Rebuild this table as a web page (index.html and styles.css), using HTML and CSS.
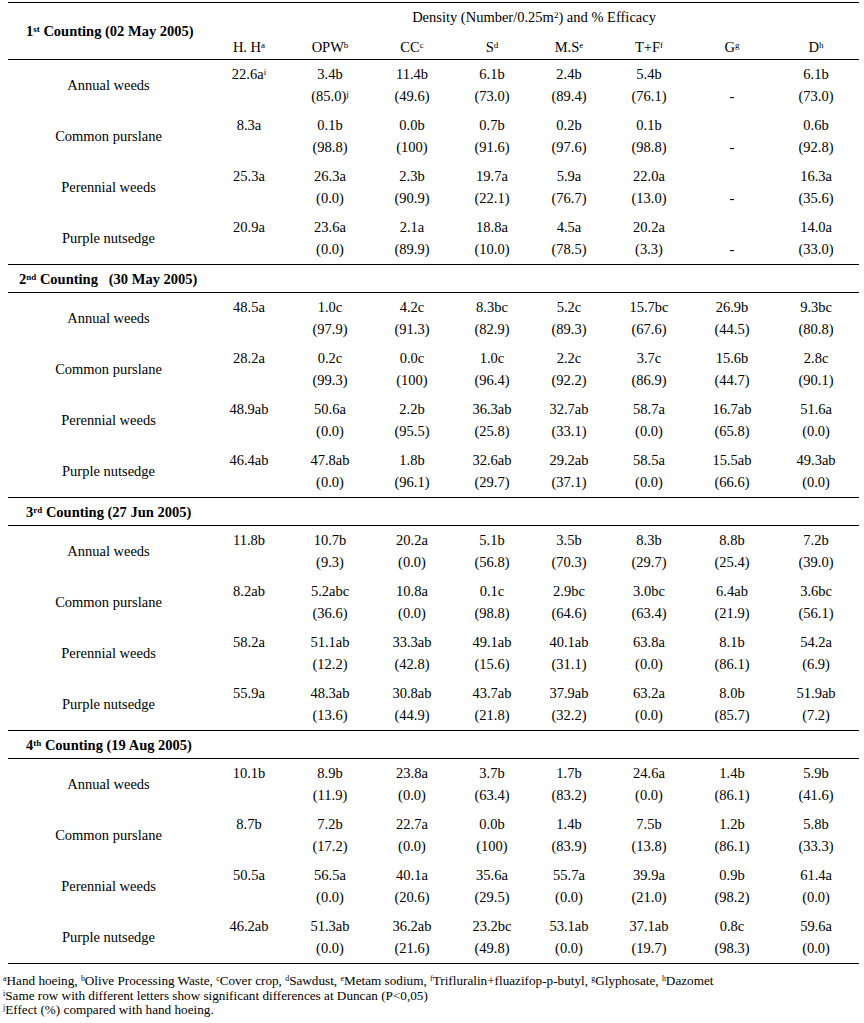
FILE: index.html
```html
<!DOCTYPE html>
<html lang="en">
<head>
<meta charset="utf-8">
<title>Weed density and efficacy</title>
<link rel="stylesheet" href="styles.css">
</head>
<body>
<table class="tbl">
  <colgroup>
    <col class="c-lbl"><col class="c-hh"><col class="c-opw"><col class="c-cc"><col class="c-s"><col class="c-ms"><col class="c-tf"><col class="c-g"><col class="c-d">
  </colgroup>
  <thead>
    <tr class="hd1">
      <td class="hd-title" rowspan="2">1<sup class="s">st</sup> Counting (02 May 2005)</td>
      <td class="hd-density" colspan="8">Density (Number/0.25m<sup class="s">2</sup>) and % Efficacy</td>
    </tr>
    <tr class="hd2">
      <td>H. H<sup class="s">a</sup></td>
      <td>OPW<sup class="s">b</sup></td>
      <td>CC<sup class="s">c</sup></td>
      <td>S<sup class="s">d</sup></td>
      <td>M.S<sup class="s">e</sup></td>
      <td>T+F<sup class="s">f</sup></td>
      <td>G<sup class="s">g</sup></td>
      <td>D<sup class="s">h</sup></td>
    </tr>
  </thead>
  <tbody>
    <tr class="grp">
      <td class="lbl">Annual weeds</td>
      <td>22.6a<sup class="s">i</sup></td>
      <td>3.4b<br>(85.0)<sup class="s">j</sup></td>
      <td>11.4b<br>(49.6)</td>
      <td>6.1b<br>(73.0)</td>
      <td>2.4b<br>(89.4)</td>
      <td>5.4b<br>(76.1)</td>
      <td>&nbsp;<br>-</td>
      <td>6.1b<br>(73.0)</td>
    </tr>
    <tr class="grp">
      <td class="lbl">Common purslane</td>
      <td>8.3a</td>
      <td>0.1b<br>(98.8)</td>
      <td>0.0b<br>(100)</td>
      <td>0.7b<br>(91.6)</td>
      <td>0.2b<br>(97.6)</td>
      <td>0.1b<br>(98.8)</td>
      <td>&nbsp;<br>-</td>
      <td>0.6b<br>(92.8)</td>
    </tr>
    <tr class="grp">
      <td class="lbl">Perennial weeds</td>
      <td>25.3a</td>
      <td>26.3a<br>(0.0)</td>
      <td>2.3b<br>(90.9)</td>
      <td>19.7a<br>(22.1)</td>
      <td>5.9a<br>(76.7)</td>
      <td>22.0a<br>(13.0)</td>
      <td>&nbsp;<br>-</td>
      <td>16.3a<br>(35.6)</td>
    </tr>
    <tr class="grp">
      <td class="lbl">Purple nutsedge</td>
      <td>20.9a</td>
      <td>23.6a<br>(0.0)</td>
      <td>2.1a<br>(89.9)</td>
      <td>18.8a<br>(10.0)</td>
      <td>4.5a<br>(78.5)</td>
      <td>20.2a<br>(3.3)</td>
      <td>&nbsp;<br>-</td>
      <td>14.0a<br>(33.0)</td>
    </tr>

    <tr class="sec">
      <td class="sec-2" colspan="9">2<sup class="s">nd</sup> Counting&nbsp;&nbsp; (30 May 2005)</td>
    </tr>
    <tr class="grp">
      <td class="lbl">Annual weeds</td>
      <td>48.5a</td>
      <td>1.0c<br>(97.9)</td>
      <td>4.2c<br>(91.3)</td>
      <td>8.3bc<br>(82.9)</td>
      <td>5.2c<br>(89.3)</td>
      <td>15.7bc<br>(67.6)</td>
      <td>26.9b<br>(44.5)</td>
      <td>9.3bc<br>(80.8)</td>
    </tr>
    <tr class="grp">
      <td class="lbl">Common purslane</td>
      <td>28.2a</td>
      <td>0.2c<br>(99.3)</td>
      <td>0.0c<br>(100)</td>
      <td>1.0c<br>(96.4)</td>
      <td>2.2c<br>(92.2)</td>
      <td>3.7c<br>(86.9)</td>
      <td>15.6b<br>(44.7)</td>
      <td>2.8c<br>(90.1)</td>
    </tr>
    <tr class="grp">
      <td class="lbl">Perennial weeds</td>
      <td>48.9ab</td>
      <td>50.6a<br>(0.0)</td>
      <td>2.2b<br>(95.5)</td>
      <td>36.3ab<br>(25.8)</td>
      <td>32.7ab<br>(33.1)</td>
      <td>58.7a<br>(0.0)</td>
      <td>16.7ab<br>(65.8)</td>
      <td>51.6a<br>(0.0)</td>
    </tr>
    <tr class="grp">
      <td class="lbl">Purple nutsedge</td>
      <td>46.4ab</td>
      <td>47.8ab<br>(0.0)</td>
      <td>1.8b<br>(96.1)</td>
      <td>32.6ab<br>(29.7)</td>
      <td>29.2ab<br>(37.1)</td>
      <td>58.5a<br>(0.0)</td>
      <td>15.5ab<br>(66.6)</td>
      <td>49.3ab<br>(0.0)</td>
    </tr>

    <tr class="sec">
      <td colspan="9">3<sup class="s">rd</sup> Counting (27 Jun 2005)</td>
    </tr>
    <tr class="grp">
      <td class="lbl">Annual weeds</td>
      <td>11.8b</td>
      <td>10.7b<br>(9.3)</td>
      <td>20.2a<br>(0.0)</td>
      <td>5.1b<br>(56.8)</td>
      <td>3.5b<br>(70.3)</td>
      <td>8.3b<br>(29.7)</td>
      <td>8.8b<br>(25.4)</td>
      <td>7.2b<br>(39.0)</td>
    </tr>
    <tr class="grp">
      <td class="lbl">Common purslane</td>
      <td>8.2ab</td>
      <td>5.2abc<br>(36.6)</td>
      <td>10.8a<br>(0.0)</td>
      <td>0.1c<br>(98.8)</td>
      <td>2.9bc<br>(64.6)</td>
      <td>3.0bc<br>(63.4)</td>
      <td>6.4ab<br>(21.9)</td>
      <td>3.6bc<br>(56.1)</td>
    </tr>
    <tr class="grp">
      <td class="lbl">Perennial weeds</td>
      <td>58.2a</td>
      <td>51.1ab<br>(12.2)</td>
      <td>33.3ab<br>(42.8)</td>
      <td>49.1ab<br>(15.6)</td>
      <td>40.1ab<br>(31.1)</td>
      <td>63.8a<br>(0.0)</td>
      <td>8.1b<br>(86.1)</td>
      <td>54.2a<br>(6.9)</td>
    </tr>
    <tr class="grp">
      <td class="lbl">Purple nutsedge</td>
      <td>55.9a</td>
      <td>48.3ab<br>(13.6)</td>
      <td>30.8ab<br>(44.9)</td>
      <td>43.7ab<br>(21.8)</td>
      <td>37.9ab<br>(32.2)</td>
      <td>63.2a<br>(0.0)</td>
      <td>8.0b<br>(85.7)</td>
      <td>51.9ab<br>(7.2)</td>
    </tr>

    <tr class="sec">
      <td colspan="9">4<sup class="s">th</sup> Counting (19 Aug 2005)</td>
    </tr>
    <tr class="grp">
      <td class="lbl">Annual weeds</td>
      <td>10.1b</td>
      <td>8.9b<br>(11.9)</td>
      <td>23.8a<br>(0.0)</td>
      <td>3.7b<br>(63.4)</td>
      <td>1.7b<br>(83.2)</td>
      <td>24.6a<br>(0.0)</td>
      <td>1.4b<br>(86.1)</td>
      <td>5.9b<br>(41.6)</td>
    </tr>
    <tr class="grp">
      <td class="lbl">Common purslane</td>
      <td>8.7b</td>
      <td>7.2b<br>(17.2)</td>
      <td>22.7a<br>(0.0)</td>
      <td>0.0b<br>(100)</td>
      <td>1.4b<br>(83.9)</td>
      <td>7.5b<br>(13.8)</td>
      <td>1.2b<br>(86.1)</td>
      <td>5.8b<br>(33.3)</td>
    </tr>
    <tr class="grp">
      <td class="lbl">Perennial weeds</td>
      <td>50.5a</td>
      <td>56.5a<br>(0.0)</td>
      <td>40.1a<br>(20.6)</td>
      <td>35.6a<br>(29.5)</td>
      <td>55.7a<br>(0.0)</td>
      <td>39.9a<br>(21.0)</td>
      <td>0.9b<br>(98.2)</td>
      <td>61.4a<br>(0.0)</td>
    </tr>
    <tr class="grp">
      <td class="lbl">Purple nutsedge</td>
      <td>46.2ab</td>
      <td>51.3ab<br>(0.0)</td>
      <td>36.2ab<br>(21.6)</td>
      <td>23.2bc<br>(49.8)</td>
      <td>53.1ab<br>(0.0)</td>
      <td>37.1ab<br>(19.7)</td>
      <td>0.8c<br>(98.3)</td>
      <td>59.6a<br>(0.0)</td>
    </tr>
  </tbody>
</table>
<div class="notes">
  <p class="note"><sup class="ns">a</sup>Hand hoeing, <sup class="ns">b</sup>Olive Processing Waste, <sup class="ns">c</sup>Cover crop, <sup class="ns">d</sup>Sawdust, <sup class="ns">e</sup>Metam sodium, <sup class="ns">f</sup>Trifluralin+fluazifop-p-butyl, <sup class="ns">g</sup>Glyphosate, <sup class="ns">h</sup>Dazomet</p>
  <p class="note"><sup class="ns">i</sup>Same row with different letters show significant differences at Duncan (P&lt;0,05)</p>
  <p class="note"><sup class="ns">j</sup>Effect (%) compared with hand hoeing.</p>
</div>
</body>
</html>
```

FILE: styles.css
```css
html, body {
  margin: 0;
  padding: 0;
  background: #fff;
}

body {
  font-family: "Liberation Serif", "Times New Roman", serif;
  color: #000;
}

.tbl {
  margin: 2px 0 0 8px;
  width: 851px;
  table-layout: fixed;
  border-collapse: separate;
  border-spacing: 0;
  font-size: 14.5px;
  line-height: 22px;
  border-bottom: 1px solid #000;
}

.c-lbl { width: 201px; }
.c-hh  { width: 80px; }
.c-opw { width: 82px; }
.c-cc  { width: 82px; }
.c-s   { width: 78px; }
.c-ms  { width: 76px; }
.c-tf  { width: 84px; }
.c-g   { width: 82px; }
.c-d   { width: 86px; }

.tbl td {
  padding: 0;
  white-space: nowrap;
}

.s {
  font-size: 0.62em;
  line-height: 0;
  vertical-align: 0.5em;
}

.hd1 td {
  border-top: 1px solid #000;
  padding: 3px 0 2px;
}

.hd1 td.hd-title {
  text-align: left;
  padding: 0 0 0 18px;
  font-weight: bold;
  vertical-align: middle;
  border-bottom: 1px solid #000;
}

.hd-density {
  text-align: center;
}

.hd2 td {
  padding: 6px 0 1px;
  text-align: center;
  border-bottom: 1px solid #000;
}

.grp td {
  padding: 3px 0 4px;
  text-align: center;
  vertical-align: top;
}

.grp td.lbl {
  vertical-align: middle;
}

.sec td {
  border-top: 1px solid #000;
  border-bottom: 1px solid #000;
  padding: 3px 0 2px 18px;
  font-weight: bold;
  text-align: left;
}

.sec td.sec-2 {
  padding-left: 11px;
}

.notes {
  margin-top: 10px;
  padding-left: 3px;
  font-size: 13.2px;
  line-height: 14.5px;
}

.note {
  margin: 0;
  white-space: nowrap;
}

.ns {
  font-size: 0.6em;
  line-height: 0;
  vertical-align: 0.5em;
}
```
